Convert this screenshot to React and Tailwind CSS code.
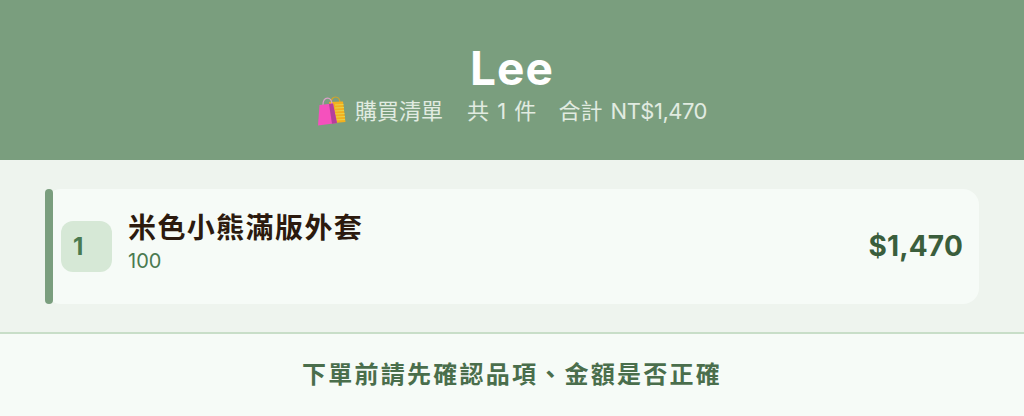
const sans = 'font-["Inter","Noto_Sans_CJK_TC",sans-serif]'

function BagsIcon() {
  return (
    <svg width="30" height="30" viewBox="0 0 30 30" className="shrink-0">
      <path d="M14 7 C14 -1 23 -1 23 7" fill="none" stroke="#d9a520" strokeWidth="1.2" />
      <path d="M12 6 L26 5.5 L28.5 26 L17 27 Z" fill="#f2b01e" />
      <path d="M18 9 L26.5 8.5 M18 12 L27 11.5 M18 15 L27 14.5 M18 18 L27.5 17.5 M18 21 L28 20.5 M18 24 L28 23.5" stroke="#e8d24a" strokeWidth="1.2" />
      <path d="M6 9 C6 0 15 0 15 8" fill="none" stroke="#d9a0c8" strokeWidth="1.2" />
      <path d="M2.5 9 L16 7.5 L20 27 L1 29.5 Z" fill="#f551bd" />
      <path d="M12 8 L16 7.5 L20 27 L15 27.7 Z" fill="#b43f9c" />
    </svg>
  )
}

export default function App() {
  return (
    <div className={`${sans} w-[1024px] h-[416px] flex flex-col overflow-hidden bg-[#eef4ee]`}>
      <header className="h-[160px] shrink-0 bg-[#7a9e7e] flex flex-col items-center pt-[38px]">
        <h1 className="text-[46px] leading-[60px] font-bold text-white tracking-[1px]">Lee</h1>
        <div className="flex items-center text-[22px] leading-[30px] text-[#e1ebe1] -mt-[2px]">
          <BagsIcon />
          <span className="ml-[8px]">購買清單</span>
          <span className="ml-[24px] [word-spacing:2px]">共 1 件</span>
          <span className="ml-[22px] [word-spacing:2px]">合計 <span className="tracking-[-0.5px]">NT$1,470</span></span>
        </div>
      </header>

      <main className="flex-1 px-[45px] pt-[29px]">
        <div className="h-[115px] flex items-center bg-[#f6fbf7] rounded-[16px] pr-[16px]">
          <div className="w-[8px] self-stretch rounded-full bg-[#7a9e7e]" />
          <div className="ml-[8px] w-[51px] h-[51px] rounded-[12px] bg-[#d6e8d6] flex items-center pl-[12px] text-[24px] font-bold text-[#4a7a50]">
            1
          </div>
          <div className="ml-[16px] flex-1 mb-[9px]">
            <div className="text-[28px] leading-[34px] font-bold tracking-[1.4px] text-[#2c1a0e]">米色小熊滿版外套</div>
            <div className="mt-[4px] text-[20px] leading-[24px] text-[#4a7a50]">100</div>
          </div>
          <div className="mb-[2px] text-[28px] font-bold text-[#3a5e3c] tracking-[0.2px]">$1,470</div>
        </div>
      </main>

      <footer className="h-[84px] shrink-0 bg-[#f6fbf7] border-t-2 border-[#c8dec8] flex items-center justify-center text-[24px] font-bold tracking-[2.25px] text-[#4a6e4c]">
        下單前請先確認品項、金額是否正確
      </footer>
    </div>
  )
}
